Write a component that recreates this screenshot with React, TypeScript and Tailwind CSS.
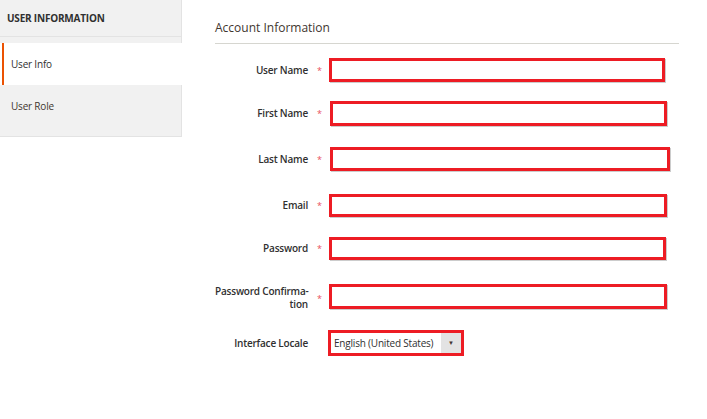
const rows = [
  { label: "User Name", row: "mt-[14px]", box: "h-[24px] w-[336px]" },
  { label: "First Name", row: "mt-[19px]", box: "ml-[1px] h-[25px] w-[337px]" },
  { label: "Last Name", row: "mt-[21px]", box: "ml-[1px] h-[24px] w-[340px]" },
  { label: "Email", row: "mt-[23px]", box: "h-[23px] w-[338px]" },
  { label: "Password", row: "mt-[20px]", box: "h-[23px] w-[337px]" },
];

const labelCls =
  "w-[93px] shrink-0 whitespace-nowrap text-right text-[10px] font-semibold tracking-[-0.2px] text-[#303030]";

function Asterisk({ extra = "" }: { extra?: string }) {
  return (
    <span
      className={`flex w-[21px] shrink-0 pl-[9px] text-[9px] leading-none text-[#e8505a] ${extra}`}
    >
      *
    </span>
  );
}

export default function App() {
  return (
    <div className="flex h-[419px] w-[707px] bg-white font-['Open_Sans',sans-serif] text-[#303030]">
      <aside className="w-[182px] shrink-0">
        <div className="flex h-[37px] items-center border-b border-r border-[#e3e3e3] bg-[#f1f1f1] px-[7px] text-[10px] font-bold tracking-[-0.2px] text-[#303030]">
          USER INFORMATION
        </div>
        <div className="h-[6px] border-r border-[#e3e3e3] bg-[#f1f1f1]" />
        <div className="flex h-[42px] bg-white pl-[2px]">
          <div className="flex flex-1 items-center border-l-[2px] border-[#eb5202] pl-[7px] text-[10px] tracking-[-0.2px] text-[#303030]">
            User Info
          </div>
        </div>
        <div className="h-[52px] border-b border-r border-[#e3e3e3] bg-[#f1f1f1] pl-[11px] pt-[14px] text-[10px] leading-[15px] tracking-[-0.2px] text-[#41362f]">
          User Role
        </div>
      </aside>

      <main className="flex-1 pl-[33px] pr-[28px]">
        <div className="border-b border-[#d6d6d0] pb-[6px] pt-[19px] text-[12px] leading-[18px] text-[#41362f]">
          Account Information
        </div>

        <div className="flex flex-col">
          {rows.map((r) => (
            <div key={r.label} className={`flex items-center ${r.row}`}>
              <div className={`${labelCls} leading-[15px]`}>{r.label}</div>
              <Asterisk />
              <div
                className={`${r.box} border-[3px] border-[#ed1c24] bg-white shadow-[1px_1px_0_#cccccc]`}
              />
            </div>
          ))}

          <div className="mt-[22px] flex items-center">
            <div className={`${labelCls} mt-[3px] h-[26px] leading-[13px]`}>
              Password Confirma-
              <br />
              tion
            </div>
            <Asterisk extra="mt-[4px]" />
            <div className="h-[25px] w-[338px] border-[3px] border-[#ed1c24] bg-white shadow-[1px_1px_0_#cccccc]" />
          </div>

          <div className="mt-[19px] flex items-center">
            <div className={`${labelCls} leading-[15px]`}>Interface Locale</div>
            <span className="w-[20px] shrink-0" />
            <div className="flex h-[26px] w-[136px] items-stretch border-[3px] border-[#ed1c24] bg-white">
              <div className="flex flex-1 items-center whitespace-nowrap pl-[3px] text-[10px] tracking-[-0.2px] text-[#303030]">
                English (United States)
              </div>
              <div className="flex w-[20px] items-center justify-center bg-[#e3e3e3] text-[6px] text-[#41362f]">
                ▼
              </div>
            </div>
          </div>
        </div>
      </main>
    </div>
  );
}
